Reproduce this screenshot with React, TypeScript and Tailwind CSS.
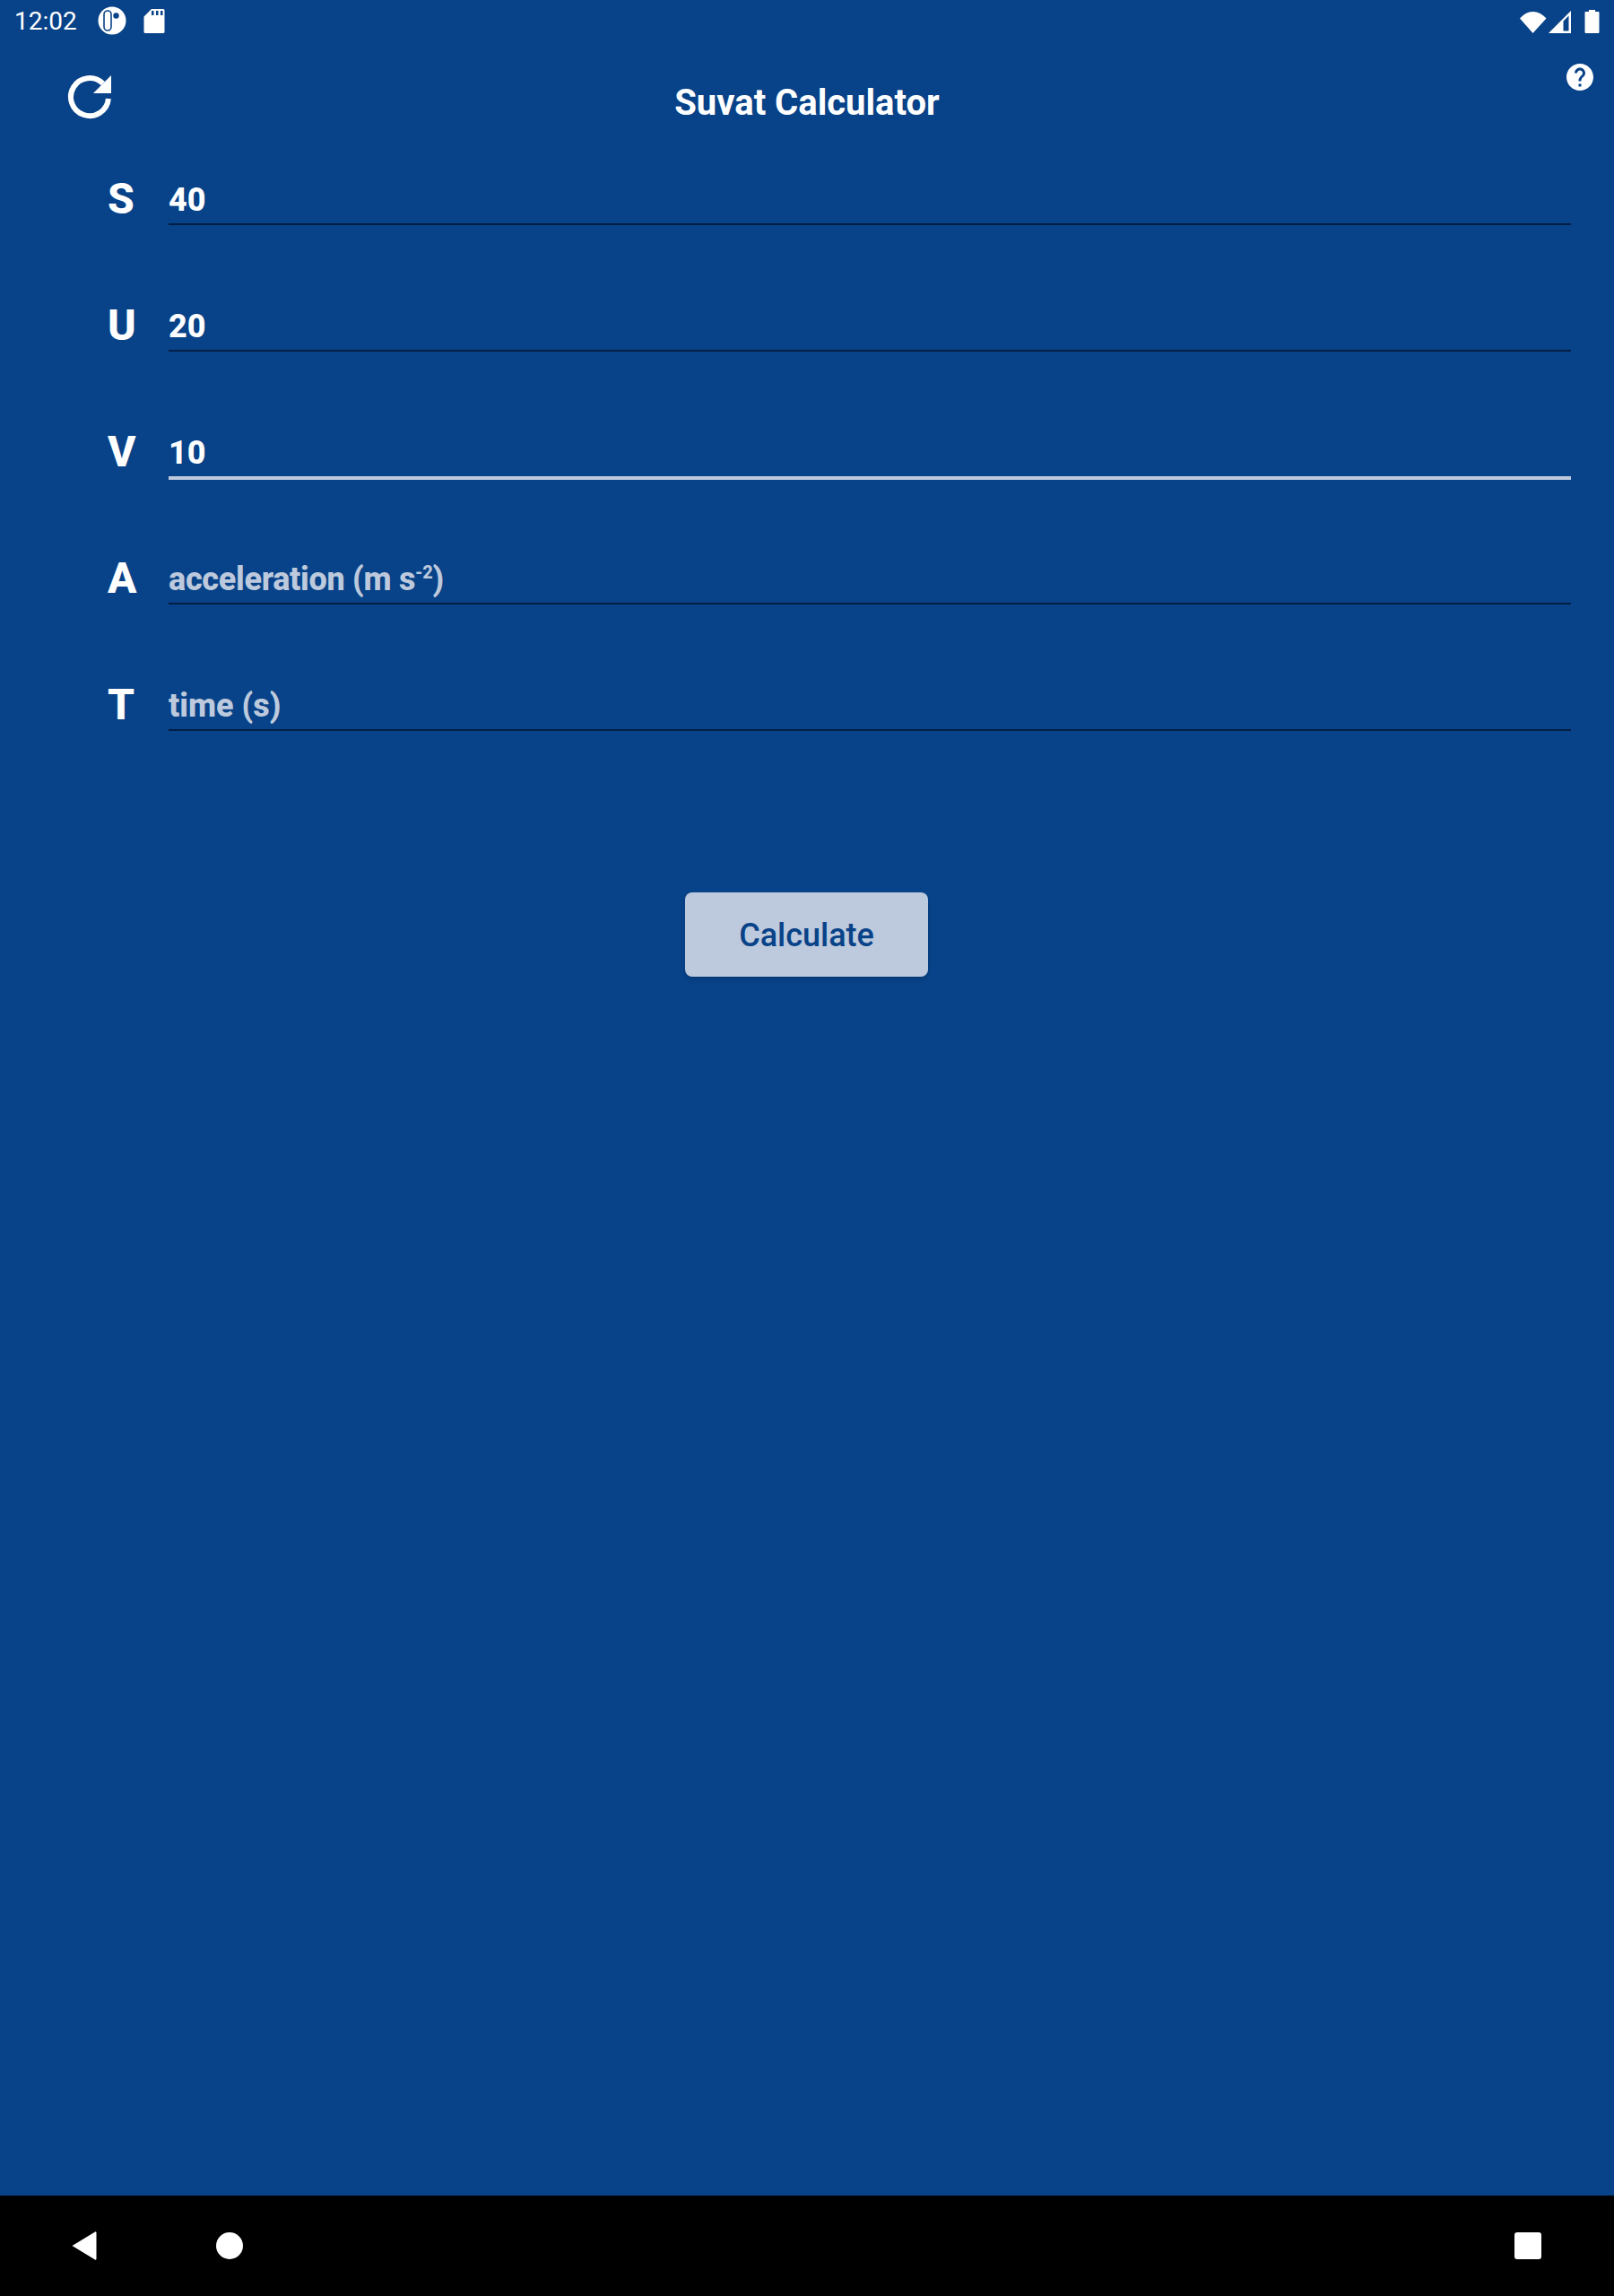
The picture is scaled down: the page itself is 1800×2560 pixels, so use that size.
const font = "font-['Roboto',sans-serif]"

type Field = {
	label: string;
	value?: string;
	placeholder?: React.ReactNode;
	focused?: boolean;
}

const fields: Field[] = [
	{ label: 'S', value: '40' },
	{ label: 'U', value: '20' },
	{ label: 'V', value: '10', focused: true },
	{ label: 'A', placeholder: <span className="tracking-[-0.3px]">acceleration (m s<sup className="text-[20px] leading-none align-baseline top-[-13px]">-2</sup>)</span> },
	{ label: 'T', placeholder: 'time (s)' },
]

function StatusBar() {
	return (
		<div className="h-[48px] flex items-center text-white">
			<span className="ml-[16px] w-[93px] text-[28px] leading-none">12:02</span>
			<svg width="32" height="32" viewBox="0 0 32 32" className="mb-[2px]">
				<circle cx="16" cy="16" r="15.500" fill="white" />
				<rect x="7" y="5" width="8" height="22" rx="4" fill="white" stroke="#084288" strokeWidth="1.600" />
				<circle cx="20.500" cy="10.500" r="3.200" fill="#084288" />
			</svg>
			<svg width="24" height="28" viewBox="0 0 24 28" className="ml-[19px] mb-[2px]">
				<path d="M9 1h13a1.500 1.500 0 0 1 1.500 1.500v24a1.500 1.500 0 0 1-1.500 1.500H2a1.500 1.500 0 0 1-1.500-1.500V9.500z" fill="white" />
				<path d="M9 3h2.500v5H9zM14 3h2.500v5H14zM19 3h2.500v5H19z" fill="#084288" />
			</svg>
			<div className="ml-auto flex items-center">
				<svg width="32" height="26" viewBox="0 0 32 26" className="mr-[1px] mb-[1px]">
					<path d="M1 9.500C5 5 10 2 15.500 2S26.500 5 30.500 9.500L15.500 26z" fill="white" />
				</svg>
				<svg width="26" height="26" viewBox="0 0 26 26" className="mb-[1px]">
					<path d="M25 1v25H0zM22.500 6.500L16.500 12.500V23.500H22.500z" fill="white" fillRule="evenodd" />
				</svg>
				<svg width="17" height="26" viewBox="0 0 17 26" className="ml-[14px] mr-[16px] mb-[1px]">
					<path d="M5 0h7v2h3.500a1 1 0 0 1 1 1v22a1 1 0 0 1-1 1h-14a1 1 0 0 1-1-1V3a1 1 0 0 1 1-1H5z" fill="white" />
				</svg>
			</div>
		</div>
	)
}

function Header() {
	return (
		<div className="relative h-[130px]">
			{/* refresh */}
			<svg width="52" height="52" viewBox="0 0 52 52" className="absolute left-[74px] top-[34px]">
				<path d="M46.900 28A21 21 0 1 1 40.800 11.200" fill="none" stroke="white" strokeWidth="6" />
				<path d="M50 2v20H30z" fill="white" />
			</svg>
			<h1 className="pt-[43px] text-center text-[40px] leading-[48px] font-bold text-white">Suvat Calculator</h1>
			<svg width="36" height="36" viewBox="0 0 24 24" className="absolute left-[1744px] top-[20px]">
				<path fill="white" d="M12 2C6.480 2 2 6.480 2 12s4.480 10 10 10 10-4.480 10-10S17.520 2 12 2zm1 17h-2v-2h2v2zm2.070-7.750l-.9.920C13.450 12.900 13 13.500 13 15h-2v-.5c0-1.100.45-2.100 1.170-2.830l1.240-1.260c.37-.36.59-.86.59-1.410 0-1.100-.9-2-2-2s-2 .9-2 2H8c0-2.210 1.790-4 4-4s4 1.790 4 4c0 .88-.36 1.680-.93 2.250z" />
			</svg>
		</div>
	)
}

function Row({ label, value, placeholder, focused }: Field) {
	return (
		<div className="flex h-[141px] pl-[120px] pr-[48px]">
			<span className="w-[68px] pt-[16px] text-[48px] leading-[56px] font-extrabold text-white">{label}</span>
			<div className={`flex-1 ${focused ? 'h-[75px] border-b-[4px] border-[#BDC9DC]' : 'h-[73px] border-b-2 border-[#021E45]'}`}>
				<div className={`pt-[23px] text-[36px] leading-[44px] font-extrabold ${value ? 'text-white' : 'text-[#BDC9DC]'}`}>
					{value ?? placeholder}
				</div>
			</div>
		</div>
	)
}

export default function App() {
	return (
		<div className={`${font} h-[2560px] flex flex-col bg-[#084288]`}>
			<StatusBar />
			<Header />
			<div className="flex-1">
				{fields.map(field => <Row key={field.label} {...field} />)}
				<div className="flex justify-center pt-[112px] pr-[1px]">
					<button className="w-[271px] h-[94px] rounded-[8px] bg-[#BDC9DC] shadow-md text-[36px] leading-[44px] pt-[2px] font-medium text-[#084288]">Calculate</button>
				</div>
			</div>
			<div className="h-[112px] flex items-center bg-black">
				<svg width="30" height="34" viewBox="0 0 30 34" className="ml-[79px]">
					<path d="M1.500 17L27 1.500a1 1 0 0 1 1.500 1v29a1 1 0 0 1-1.500 1z" fill="white" />
				</svg>
				<div className="ml-[132px] w-[30px] h-[30px] rounded-full bg-white" />
				<div className="ml-auto mr-[81px] w-[30px] h-[30px] rounded-[3px] bg-white" />
			</div>
		</div>
	)
}
